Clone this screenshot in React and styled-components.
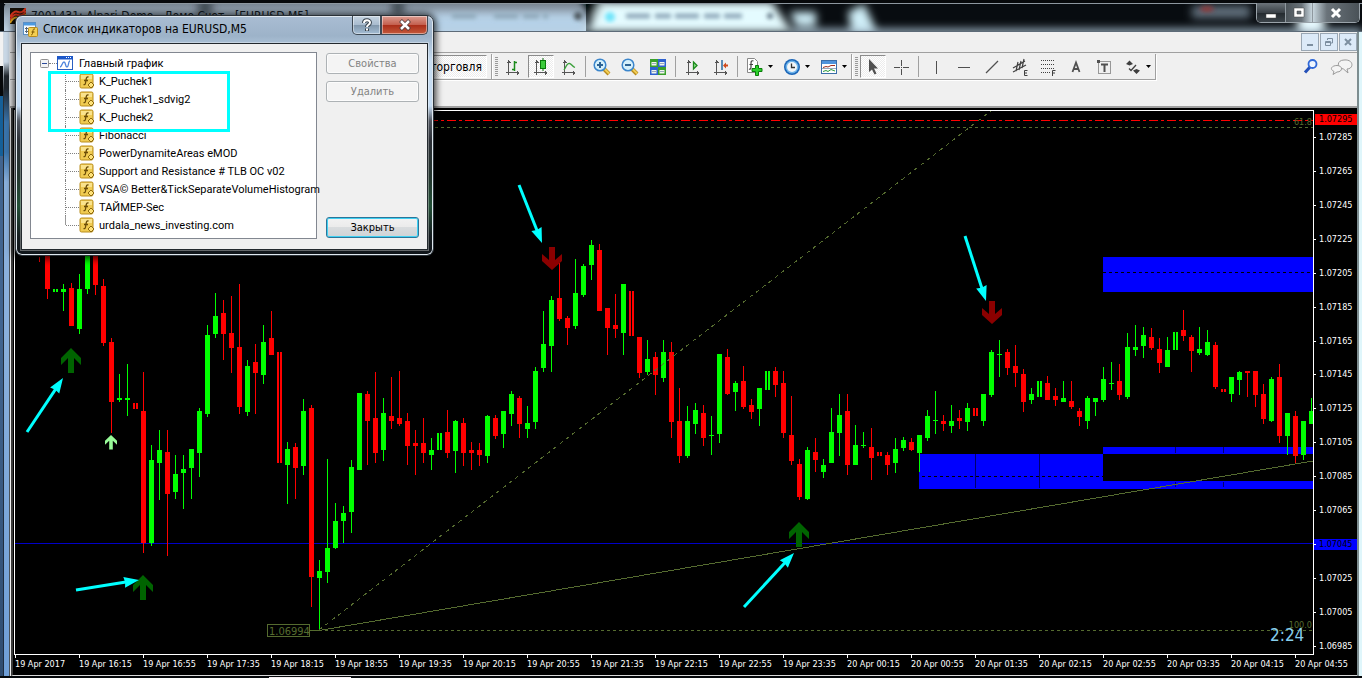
import React from 'react';
import styled, { createGlobalStyle } from 'styled-components';

const UI_FONT = '"DejaVu Sans Condensed", "Noto Sans", sans-serif';
const OLIVE = '#556b2f';

const GlobalStyle = createGlobalStyle`
  * { box-sizing: border-box; }
  body { margin: 0; background: #000; font-family: ${UI_FONT}; font-size: 11px; color: #000; }
  button { font: inherit; padding: 0; margin: 0; }
  svg { display: block; flex: none; }
`;

/* ---------- window frame ---------- */

const Screen = styled.div`
  position: relative;
  min-height: 100vh;
  overflow: hidden;
  background: #05080b;
`;

const TitleBar = styled.header`
  display: flex;
  align-items: flex-start;
  height: 32px;
  border-top: 3px solid #07090b;
  border-bottom: 1px solid #5d6b78;
  overflow: hidden;
  position: relative;
  background: #080c10;
`;

const Glass = styled.svg`
  position: absolute;
  left: 0;
  top: 0;
`;

const WindowTitle = styled.div`
  position: relative;
  display: flex;
  flex: 1;
  gap: 5px;
  padding: 5px 0 0 10px;
  font-size: 12px;
  line-height: 16px;
  color: #101820;
`;

const CaptionGroup = styled.div`
  position: relative;
  display: flex;
  height: 20px;
  margin-right: 2px;
  border: 1px solid #9aa3aa;
  border-top: 0;
  border-radius: 0 0 5px 5px;
  overflow: hidden;
`;

const CaptionButton = styled.button`
  display: grid;
  place-items: center;
  width: ${(p) => p.$width}px;
  border: 0;
  border-left: ${(p) => (p.$first ? 0 : '1px solid #8f989f')};
  background: ${(p) => p.$fill || 'linear-gradient(#6c747b, #3a4147 50%, #23292e 51%, #3b4349)'};
`;

const Frame = styled.div`
  display: grid;
  grid-template-columns: 10px 1fr 5px;
`;

const RightEdge = styled.div`
  background: linear-gradient(90deg, #7d8d90 0 2px, #dff6fb 2px);
`;

const LeftEdge = styled.div`
  display: grid;
  grid-template-columns: 3px 1px 5px 1px;
`;

const Desktop = styled.div`
  background: linear-gradient(#f2f2f2 34px, #06080a 34px 64px, #155f98 64px 124px, #41648f 124px 300px, #2f4c70);
`;

const EdgeLine = styled.div`
  background: ${(p) => p.$fill};
`;

const Client = styled.main`
  min-width: 0;
  background: #f0f0f0;
`;

/* ---------- menu and tool bars ---------- */

const MenuRow = styled.div`
  display: flex;
  justify-content: flex-end;
  gap: 1px;
  height: 21px;
  padding: 1px 0;
  border-bottom: 1px solid #a0a0a0;
`;

const ChildButton = styled.button`
  display: grid;
  place-items: center;
  width: 18px;
  height: 18px;
  border: 1px solid #9aa7b4;
  background: #dceaf8;
`;

const ToolRow = styled.div`
  display: flex;
  height: 55px;
  padding-top: 1px;
  border-bottom: 2px solid #a0a0a0;
  align-items: flex-start;
`;

const ToolBar = styled.div`
  display: flex;
  align-items: center;
  height: 26px;
  border-right: 1px solid #a0a0a0;
  border-bottom: 1px solid #a0a0a0;
  box-shadow: 1px 1px 0 #fff;
`;

const Grip = styled.span`
  width: 3px;
  height: 20px;
  margin: 0 1px 0 3px;
  background: repeating-linear-gradient(#9a9a9a 0 1px, #f0f0f0 1px 2px);
`;

const pressed = `
  border: 1px solid #fff;
  border-top-color: #8c8c8c;
  border-left-color: #8c8c8c;
  background: repeating-conic-gradient(#fff 0 25%, #ececec 0 50%) 0 0 / 2px 2px;
`;

const Tool = styled.button`
  display: flex;
  align-items: center;
  justify-content: center;
  width: ${(p) => (p.$menu ? 37 : p.$pressed ? 26 : 28)}px;
  height: 23px;
  margin: 0 ${(p) => (p.$pressed ? 1 : 0)}px;
  gap: 3px;
  border: 0;
  background: transparent;
  ${(p) => p.$pressed && pressed}
`;

const Lead = styled.span`
  width: 367px;
`;

const AutoTrade = styled.button`
  width: 110px;
  height: 23px;
  margin-right: 4px;
  padding-right: 4px;
  text-align: right;
  font-size: 12px;
  line-height: 16px;
  ${pressed}
`;

const Divider = styled.span`
  width: 1px;
  height: 21px;
  margin: 0 ${(p) => (p.$wide ? 3 : 2)}px;
  background: #a0a0a0;
`;

const RightTools = styled.div`
  display: flex;
  gap: 9px;
  margin-left: auto;
  padding: 3px 4px 0 0;
`;

const PlainButton = styled.button`
  border: 0;
  background: transparent;
`;

/* ---------- chart ---------- */

const ChartWindow = styled.section`
  display: grid;
  grid-template-columns: 1fr 43px;
  margin-left: 1px;
  border-left: 2px solid #3c3c3c;
  padding: 2px 0 0 1px;
  background: #000;
  border-bottom: 1px solid #d8d8d8;
`;

const Plot = styled.div`
  min-width: 0;
  overflow: hidden;
  border: 1px solid #fff;
`;

const Scene = styled.svg`
  width: 100%;
  height: 543px;
`;

const PriceAxis = styled.div`
  display: flex;
  flex-direction: column;
  justify-content: space-between;
  position: relative;
  padding: 22px 0 3px;
  color: #fff;
  font-size: 9px;
  line-height: 11px;
`;

const Price = styled.div`
  display: flex;
  align-items: center;
  gap: 3px;
  color: ${(p) => (p.$tag ? '#000' : '#fff')};
  background: ${(p) => p.$tag || 'transparent'};
  &::before { content: ''; width: 2px; height: 1px; background: #fff; }
`;

const AskTag = styled.div`
  position: absolute;
  top: 4px;
  left: 1px;
  right: 0;
  padding-left: 4px;
  color: #000;
  background: #f00;
`;

const TimeAxis = styled.div`
  grid-column: 1 / -1;
  display: flex;
  height: 20px;
  padding-left: 1px;
  overflow: hidden;
  color: #fff;
  font-size: 9px;
  line-height: 13px;
`;

const Time = styled.div`
  flex: none;
  width: 64px;
  white-space: nowrap;
  &::before { content: ''; display: block; width: 1px; height: 3px; background: #fff; }
`;

const ScreenStrip = styled.div`
  width: 82px;
  height: 2px;
  margin: 1px 0 0 269px;
  background: #f6eef2;
`;

/* ---------- dialog ---------- */

const Dialog = styled.section`
  position: absolute;
  left: 15px;
  top: 15px;
  width: 419px;
  padding: 0 5px 5px;
  border: 1px solid #2b3238;
  border-radius: 7px;
  background: linear-gradient(#a9bdd3 0, #9db3c9 20px, #c7dcf0 45px, #c4dbf2 90px, #4f555f 105px, #2b2f36 125px, #24352e 160px, #235037 190px, #161d20 220px, #10151a);
  box-shadow: inset 0 0 0 1px #dfe7ee, 0 1px 7px 2px rgba(0, 0, 0, 0.75);
`;

const DialogTitle = styled.header`
  display: flex;
  height: 27px;
  padding-left: 2px;
`;

const TitleText = styled.h1`
  flex: 1;
  margin: 0;
  padding-left: 4px;
  font-size: 12px;
  line-height: 26px;
  font-weight: 400;
`;

const TitleButton = styled.button`
  display: grid;
  place-items: center;
  width: ${(p) => (p.$close ? 47 : 29)}px;
  height: 19px;
  border: 1px solid #3f4a55;
  border-top: 0;
  border-radius: ${(p) => (p.$close ? '0 0 5px 0' : '0 0 0 5px')};
  background: ${(p) =>
    p.$close
      ? 'linear-gradient(#dc9c90, #c4604f 48%, #a92c18 50%, #c55a3c)'
      : 'linear-gradient(#c5d3e0, #a9bccf 48%, #8096ab 50%, #a4bdd4)'};
  box-shadow: inset 0 0 0 1px rgba(255, 255, 255, 0.45);
`;

const DialogBody = styled.div`
  display: flex;
  gap: 9px;
  height: 207px;
  padding: 8px 8px 10px;
  border: 1px solid #23292e;
  background: #f0f0f0;
  box-shadow: 0 0 0 1px rgba(255, 255, 255, 0.35);
`;

const Tree = styled.div`
  position: relative;
  flex: 1;
  min-width: 0;
  padding: 1px 0 0 9px;
  border: 1px solid #828790;
  background: #fff;
  font-family: Roboto, "DejaVu Sans Condensed", sans-serif;
`;

const TreeRoot = styled.div`
  display: flex;
  align-items: center;
  height: 18px;
  white-space: nowrap;
`;

const Leader = styled.span`
  flex: none;
  width: ${(p) => p.$width}px;
  border-top: 1px dotted #808080;
`;

const NodeName = styled.span`
  padding-left: ${(p) => (p.$root ? 6 : 4)}px;
`;

const TreeList = styled.ul`
  list-style: none;
  margin: 0 0 0 25px;
  padding: 0;
`;

const TreeItem = styled.li`
  display: flex;
  align-items: center;
  height: 18px;
  white-space: nowrap;
  border-left: 1px dotted #808080;
  &:last-child { border-image: linear-gradient(#999 50%, transparent 50%) 1; }
`;

const Highlight = styled.div`
  position: absolute;
  left: 17px;
  top: 18px;
  width: 182px;
  height: 61px;
  border: 3px solid #0ff;
`;

const Actions = styled.div`
  display: flex;
  flex-direction: column;
  gap: 7px;
  width: 93px;
  padding: 1px 0;
`;

const PushButton = styled.button`
  height: 21px;
  border: 1px solid ${(p) => (p.$primary ? '#2c7599' : '#adb2b5')};
  border-radius: 3px;
  background: ${(p) => (p.$primary ? 'linear-gradient(#f2f2f2, #ebebeb 48%, #d9dcde 50%, #cfd3d6)' : '#f4f4f4')};
  box-shadow: inset 0 0 0 1px ${(p) => (p.$primary ? '#3fd0f2' : '#fcfcfc')};
  color: ${(p) => (p.$primary ? '#000' : '#838383')};
  margin-top: ${(p) => (p.$primary ? 'auto' : '0')};
`;

/* ---------- candles: colour, high, body top, body bottom, low (* = split body) ---------- */

const CANDLES = `
R257 257 262 262|R250 250 289 299|G* 289 292|G284 289 292 311|R283 288 326 326|G274 289 329 334|G250 250 289 294|R250 250 285 295|R279 286 343 346|R338 342 402 433
G374 398 400 402|G364 398 400 416|R* 403 409|R372 411 543 553|G445 460 543 546|G430 450 463 500|R430 452 494 556|G455 474 492 499|G455 469 473 509|G449 449 468 499
G408 411 453 477|G325 335 414 417|G293 316 334 338|R300 313 334 360|R296 333 348 373|R284 347 407 414|G360 366 412 416|R344 362 373 414|G325 342 375 384|R311 338 355 355
R* 352 463|G442 449 465 504|R443 447 468 499|G399 411 466 475|R405 408 577 607|G560 571 578 630|G459 548 572 583|G503 521 548 549|G506 513 521 543|G460 467 512 533
G393 393 470 470|R391 394 421 465|R372 418 453 463|G398 413 450 461|R377 416 421 429|R371 418 424 426|R413 421 446 465|R430 443 446 475|R418 443 453 463|G438 450 455 470
G* 433 450|R410 432 453 458|G420 421 451 473|R418 423 453 466|R442 450 453 470|R443 450 455 466|G415 416 456 463|R415 418 436 439|G411 411 434 448|G391 394 414 426
R396 398 424 438|G406 423 429 438|G367 371 422 429|G311 344 368 372|G296 300 346 372|R263 298 319 321|R316 318 328 345|G259 293 326 329|G264 266 295 297|G240 245 265 280
R244 250 311 311|R308 308 328 355|R294 325 329 338|G284 284 333 355|R* 291 336|R337 337 373 378|G340 359 372 375|R352 357 375 395|G340 352 378 382|R342 352 422 438
R388 421 456 463|G406 421 456 458|G403 410 424 434|R405 413 438 446|G416 435 436 455|G354 354 434 443|R349 357 394 395|G381 383 392 411|R366 381 407 409|R399 405 412 419
G388 388 409 426|G* 371 390|R367 371 385 397|R371 383 433 438|R396 435 461 465|R459 464 497 500|G447 450 499 500|R438 452 460 472|G459 465 472 478|G408 432 463 463
G394 415 433 456|R394 411 465 475|G425 445 465 465|G432 445 446 448|R428 447 458 480|R* 452 456|R452 455 465 475|G438 449 463 473|G437 440 448 451|R438 442 450 451
G435 435 453 472|G410 416 438 441|G391 420 421 434|R415 421 424 431|G405 421 426 433|R410 418 421 429|G403 408 422 431|R* 408 416|G394 394 421 426|G350 352 395 397
G340 354 355 377|R349 352 368 375|R345 366 373 387|R369 374 402 412|G388 394 400 404|G* 381 397|R376 383 400 400|R388 396 400 406|G381 398 402 402|R381 401 407 409
R408 411 417 426|G396 398 421 429|G398 398 402 416|G367 379 400 402|G362 383 384 390|R364 381 395 400|G333 347 397 399|G325 347 350 356|G327 335 346 358|R328 337 348 350
R338 349 363 373|G337 350 367 367|G* 332 350|R310 330 336 341|R335 337 351 372|G327 349 353 355|G330 342 355 356|R342 345 387 389|R* 389 392|G377 377 394 402
G371 372 380 395|R371 371 373 397|R371 371 395 407|R384 394 419 424|G377 379 421 422|R364 377 436 443|G413 413 436 455|R411 416 456 464|G421 421 455 460|G398 411 424 424
`
  .trim()
  .split(/[|\n]/)
  .map((s, i) => {
    const v = s.slice(1).trim().split(' ');
    const split = v[0] === '*';
    const [high, top, bottom, low] = split ? [0, +v[1], +v[2], 0] : v.map(Number);
    return { x: 39 + 8 * i, color: s[0] === 'R' ? '#f00' : '#0f0', split, high, top, bottom, low };
  });

const PRICES = ['1.07285', '1.07265', '1.07245', '1.07225', '1.07205', '1.07185', '1.07165', '1.07145', '1.07125', '1.07105', '1.07085', '1.07065', '1.07045', '1.07025', '1.07005', '1.06985'];
const TIMES = ['19 Apr 2017', '19 Apr 16:15', '19 Apr 16:55', '19 Apr 17:35', '19 Apr 18:15', '19 Apr 18:55', '19 Apr 19:35', '19 Apr 20:15', '19 Apr 20:55', '19 Apr 21:35', '19 Apr 22:15', '19 Apr 22:55', '19 Apr 23:35', '20 Apr 00:15', '20 Apr 00:55', '20 Apr 01:35', '20 Apr 02:15', '20 Apr 02:55', '20 Apr 03:35', '20 Apr 04:15', '20 Apr 04:55'];
const INDICATORS = ['K_Puchek1', 'K_Puchek1_sdvig2', 'K_Puchek2', 'Fibonacci', 'PowerDynamiteAreas eMOD', 'Support and Resistance # TLB OC v02', 'VSA© Better&TickSeparateVolumeHistogram', 'ТАЙМЕР-Sec', 'urdala_news_investing.com'];
const POINTERS = [[27, 432, 63, 378], [76, 590, 139, 580], [519, 185, 542, 243], [744, 607, 794, 553], [965, 236, 986, 301]];

function Candle({ x, color, split, high, top, bottom, low }) {
  if (split) {
    return (
      <g fill={color}>
        <rect x={x - 2} y={top} width="2" height={bottom - top} />
        <rect x={x + 1} y={top} width="2" height={bottom - top} />
      </g>
    );
  }
  return (
    <g fill={color}>
      <rect x={x} y={high} width="1" height={low - high} />
      {x > 39 && <rect x={x - 2} y={top} width="5" height={bottom - top} />}
    </g>
  );
}

function Signal({ x, y, color, down, small }) {
  const flip = down ? -1 : 1;
  return (
    <path
      transform={`translate(${x} ${y}) scale(${small ? 0.6 : 1} ${flip * (small ? 0.58 : 1)})`}
      fill={color}
      d={down ? 'M0 0L10 9V16L3 10V23H-3V10L-10 16V9Z' : 'M0 0L10 10V17L3 10V25H-3V10L-10 17V10Z'}
    />
  );
}

function Pointer({ from: [x1, y1, x2, y2] }) {
  const a = Math.atan2(y2 - y1, x2 - x1);
  const len = Math.hypot(x2 - x1, y2 - y1);
  return (
    <g transform={`translate(${x1} ${y1}) rotate(${(a * 180) / Math.PI})`} fill="#0ff">
      <rect x="0" y="-1.5" width={len - 10} height="3" />
      <path d={`M${len} 0L${len - 15} -5.5L${len - 14} 0L${len - 15} 5.5Z`} />
    </g>
  );
}

function Chart() {
  return (
    <Scene viewBox="15 111 1298 543" preserveAspectRatio="xMinYMin slice" fontFamily='"DejaVu Sans Condensed", sans-serif'>
      <g fill="#00f" shapeRendering="crispEdges">
        <rect x="1103" y="257" width="210" height="35" />
        <rect x="919" y="454" width="184" height="35" />
        <rect x="1103" y="447" width="210" height="7" />
        <rect x="1103" y="481" width="210" height="8" />
      </g>
      <g stroke="#000" fill="none" shapeRendering="crispEdges">
        <path d="M1103 272.5H1313M922 476.5H1103" strokeDasharray="3 3" />
        <path d="M975.5 454V488M1039.5 454V488" stroke="#00006a" />
        <path d="M1175.5 447V453M1223.5 447V453M1175.5 482V487M1223.5 482V487" stroke="#00006a" />
      </g>
      <path d="M15 543.5H1313" stroke="#0000c8" shapeRendering="crispEdges" />
      <g shapeRendering="crispEdges">{CANDLES.map((c) => <Candle key={c.x} {...c} />)}</g>
      <g stroke={OLIVE} fill="none" shapeRendering="crispEdges">
        <path d="M15 127.5H1313M319 630.5H1313" strokeDasharray="3 3" />
        <path d="M319 630L992 110" strokeDasharray="4 4" />
        <path d="M310 630.5H319L1313 461" />
        <rect x="267.5" y="624.5" width="42" height="12" />
      </g>
      <path d="M15 120.5H1313" stroke="#f00" strokeDasharray="9 3 3 3" shapeRendering="crispEdges" />
      <g fill={OLIVE} fontSize="9">
        <text x="1312" y="125" textAnchor="end">61.8</text>
        <text x="1312" y="628" textAnchor="end">100.0</text>
        <text x="269" y="635" fontSize="11">1.06994</text>
      </g>
      <text x="1270" y="641" fill="#87ceeb" fontSize="17">2:24</text>
      <Signal x={71} y={348} color="#006400" />
      <Signal x={143} y={575} color="#006400" />
      <Signal x={799} y={522} color="#006400" />
      <Signal x={552} y={270} color="#8b0000" down />
      <Signal x={992} y={324} color="#8b0000" down />
      <Signal x={111} y={435} color="#98fb98" small />
      {POINTERS.map((p) => <Pointer key={p[0]} from={p} />)}
    </Scene>
  );
}

/* ---------- icons ---------- */

function Icon({ children, size = 20 }) {
  return <svg width={size} height="20" viewBox={`0 0 ${size} 20`} fill="none" aria-hidden="true">{children}</svg>;
}

const Axes = () => (
  <g stroke="#555" shapeRendering="crispEdges">
    <path d="M5.500 3V18M3 15.500H16" />
    <path d="M3.500 5.500H8M4.500 4.500H7M14.500 13.500V18M15.500 14.500V17" />
  </g>
);

const Magnifier = ({ plus }) => (
  <Icon>
    <path d="M11.500 11.500L17 17" stroke="#b88a1c" strokeWidth="4" />
    <path d="M11.500 11L17 16.500" stroke="#f2cf57" strokeWidth="2" />
    <circle cx="8" cy="8" r="5.800" fill="#d5f0fb" stroke="#3b86cc" strokeWidth="1.500" />
    <path d={plus ? 'M5 8H11M8 5V11' : 'M5 8H11'} stroke="#2d6394" strokeWidth="2" />
  </Icon>
);

const DropArrow = () => (
  <svg width="5" height="3" viewBox="0 0 5 3" aria-hidden="true"><path d="M0 0H5L2.500 3Z" fill="#000" /></svg>
);

const icons = {
  bars: <Icon><Axes /><path d="M11.500 4V14M9 12.500H11.500M11.500 5.500H14" stroke="#1a8a1a" strokeWidth="1.500" /></Icon>,
  candles: <Icon><Axes /><path d="M12 1V14" stroke="#0a6a0a" /><rect x="9.500" y="3.500" width="5" height="8" fill="#3ccc3c" stroke="#0a7a0a" /></Icon>,
  line: <Icon><Axes /><path d="M5 13C7 10 8 6 10.500 6.500C13 7 13 9.500 16 10.500" stroke="#3aa03a" strokeWidth="1.300" /></Icon>,
  zoomIn: <Magnifier plus />,
  zoomOut: <Magnifier />,
  tile: (
    <Icon>
      <rect x="2" y="2" width="8" height="8" fill="#3aa02c" /><rect x="10" y="2" width="8" height="8" fill="#2e62d0" />
      <rect x="2" y="10" width="8" height="8" fill="#2e62d0" /><rect x="10" y="10" width="8" height="8" fill="#3aa02c" />
      <path d="M3.500 5H8.500V8.500H3.500ZM11.500 5H16.500V8.500H11.500ZM3.500 13H8.500V16.500H3.500ZM11.500 13H16.500V16.500H11.500Z" fill="#f2f6ee" />
      <path d="M4 6.500H8M12 6.500H16M4 14.500H8M12 14.500H16" stroke="#9ab" />
    </Icon>
  ),
  scroll: <Icon><Axes /><path d="M10.500 5L14 8.500L10.500 12Z" fill="#8fe08f" stroke="#1a8a1a" strokeWidth="1.300" /></Icon>,
  shift: <Icon><Axes /><path d="M11 3V13" stroke="#2a6aa0" strokeWidth="1.500" /><path d="M12 8.500L15 5.500V7.500H17V9.500H15V11.500Z" fill="#d04a1c" /></Icon>,
  addIndicator: (
    <Icon>
      <path d="M2.500 1.500H9.500L12.500 4.500V15.500H2.500Z" fill="#fff" stroke="#888" />
      <path d="M8.500 4C6 3 6 5 6 7V10C6 12 5 12.500 4 12M4.500 7.500H8" stroke="#444" strokeWidth="1.200" />
      <path d="M10.500 8.500H13.500V11.500H17V14.500H13.500V18.500H10.500V14.500H7V11.500H10.500Z" fill="#2bd02b" stroke="#0b7c0b" />
    </Icon>
  ),
  clock: (
    <Icon>
      <circle cx="10" cy="10" r="8" fill="#1b66b8" /><circle cx="10" cy="10" r="6.500" fill="#6fb4ea" /><circle cx="10" cy="10" r="5" fill="#f2f5f8" />
      <path d="M9.500 6.500V10.500H13" stroke="#333" strokeWidth="1.300" />
    </Icon>
  ),
  template: (
    <Icon>
      <rect x="2.500" y="3.500" width="15" height="13" fill="#fff" stroke="#3a6ea8" /><rect x="3" y="4" width="14" height="3" fill="#4f94dc" />
      <path d="M4 10.500L7 9.500L9 10L12 8.500L16 8.500" stroke="#a03020" /><path d="M4 14.500L7 13.500L9 14.500L12 12.500L16 14" stroke="#2a9a3a" /><path d="M3 11.500H17" stroke="#9ab" />
    </Icon>
  ),
  cursor: <Icon><path d="M6 2V15L9 12.500L11.500 17.500L13.500 16.500L11 11.500H15Z" fill="#505050" /></Icon>,
  cross: <Icon><path d="M10.500 3V9M10.500 12V18M3 10.500H9M12 10.500H18M10 10.500H11" stroke="#505050" /></Icon>,
  vline: <Icon><path d="M10.500 4V17" stroke="#505050" /></Icon>,
  hline: <Icon><path d="M4 10.500H16" stroke="#505050" /></Icon>,
  trend: <Icon><path d="M4 16L16 4" stroke="#505050" strokeWidth="1.200" /></Icon>,
  channel: (
    <Icon>
      <path d="M3 11L15 4M3 15L16 8M6 14L8 5M9 13L11 4M12 11L14 2" stroke="#404040" strokeWidth="1.200" />
      <path d="M17.500 13.500H14.500V18.500H17.500M14.500 16H17" stroke="#404040" />
    </Icon>
  ),
  fibo: (
    <Icon>
      <path d="M3 3.500H17M3 7.500H17M3 11.500H17M3 15.500H12" stroke="#404040" strokeDasharray="1 1" />
      <path d="M17.500 13.500H14.500V19M14.500 16H17" stroke="#404040" />
    </Icon>
  ),
  text: <Icon><path d="M6.500 15L10 5.500L13.500 15M7.500 12H12.500" stroke="#505050" strokeWidth="1.800" /></Icon>,
  label: (
    <Icon>
      <rect x="4.500" y="4.500" width="12" height="12" stroke="#404040" strokeDasharray="1 1" /><path d="M3 3H6V6H3Z" fill="#505050" />
      <path d="M7 7.500H14M10.500 7.500V15" stroke="#505050" strokeWidth="2" />
    </Icon>
  ),
  arrows: <Icon><path d="M3 7L6.500 3.500L10 7L6.500 8.500ZM10 13.500L13.500 12L17 13.500L13.500 17Z" fill="#404040" /><path d="M6 11.500L8 13.500L13 8" stroke="#404040" strokeWidth="1.300" /></Icon>,
};

const FunctionIcon = () => (
  <svg width="16" height="16" viewBox="0 0 16 16" fill="none" aria-hidden="true">
    <rect x="1" y="1" width="13" height="14" rx="1.500" fill="#f0cb52" stroke="#b98d1c" />
    <path d="M2 2H13V6H2Z" fill="#fae38c" />
    <path d="M9.500 4C7.500 3.500 7.300 5 7 7L6.500 10C6.300 11.500 5.500 12 4.500 11.500M5 7.500H9" stroke="#6b4d08" strokeWidth="1.300" />
    <path d="M12 9L15 12L12 15L9 12Z" fill="#ffe27a" stroke="#8f6a0c" />
  </svg>
);

function ToolButton({ icon, label, ...rest }) {
  return (
    <Tool aria-label={label} {...rest}>
      {icons[icon]}
      {rest.$menu && <DropArrow />}
    </Tool>
  );
}

/* ---------- page parts ---------- */

function MainTitle() {
  return (
    <TitleBar>
      <Glass width="1362" height="29" viewBox="0 3 1362 29" aria-hidden="true">
        <defs>
          <linearGradient id="tab" x1="0" y1="0" x2="0" y2="1"><stop offset="0" stopColor="#76838f" /><stop offset="0.500" stopColor="#a3b4c5" /><stop offset="1" stopColor="#c2d6e8" /></linearGradient>
          <filter id="soft"><feGaussianBlur stdDeviation="4" /></filter>
          <filter id="mist"><feGaussianBlur stdDeviation="2" /></filter>
        </defs>
        <path d="M4 32V8Q4 3 9 3H586V32Z" fill="url(#tab)" />
        <g filter="url(#soft)">
          <path d="M430 14H580L586 32H430Z" fill="#b6d2e8" />
          <path d="M586 32L602 2H772L792 32Z" fill="#e4fbff" />
          <path d="M580 -6H606L594 18H588Z" fill="#05080b" />
          <path d="M198 0H212V14H198ZM392 0H404V14H392Z" fill="#3a444e" />
          <path d="M790 12H816V26H796ZM848 12L864 4L878 34H852Z" fill="#cfeef8" />
          <path d="M790 29H1362V36H790Z" fill="#a8c0d0" />
          <path d="M1192 6H1250V18H1192Z" fill="#64727f" />
          <ellipse cx="1311" cy="22" rx="15" ry="9" fill="#e8faff" />
        </g>
        <g filter="url(#mist)">
          <path d="M452 16H478M494 16H548M626 16H742" stroke="#8fa9ba" strokeWidth="5" strokeDasharray="24 5 16 4" />
          <circle cx="610" cy="17" r="5" fill="#6fe4fa" /><circle cx="578" cy="16" r="4" fill="#48525a" /><circle cx="770" cy="16" r="3" fill="#607684" />
          <ellipse cx="1207" cy="9" rx="7" ry="3" fill="#8a3b3e" />
        </g>
        <path d="M4 3.500H1362" stroke="#8d979f" />
      </Glass>
      <WindowTitle>
        <svg width="16" height="16" viewBox="0 0 16 16" aria-hidden="true">
          <rect width="16" height="16" fill="#151008" />
          <path d="M0 9Q4 2 8 4T16 0M0 12Q4 5 8 7T16 3" stroke="#d8341c" strokeWidth="2" fill="none" /><path d="M0 15Q4 8 8 10T16 6" stroke="#f0b020" strokeWidth="2" fill="none" />
        </svg>
        <span>7001431: Alpari-Demo - Демо Счет - [EURUSD,M5]</span>
      </WindowTitle>
      <CaptionGroup>
        <CaptionButton $width={28} $first aria-label="Свернуть">
          <svg width="12" height="12" viewBox="0 0 12 12"><rect x="1" y="7" width="10" height="4" fill="#fff" stroke="#444" strokeWidth=".5" /></svg>
        </CaptionButton>
        <CaptionButton $width={27} aria-label="Развернуть" $fill="linear-gradient(90deg, #4c545a, #6a737a 60%, #c8d6de)">
          <svg width="12" height="12" viewBox="0 0 12 12"><path d="M1 1H11V10H1ZM4 4V7H8V4Z" fill="#fff" fillRule="evenodd" stroke="#444" strokeWidth=".5" /></svg>
        </CaptionButton>
        <CaptionButton $width={47} aria-label="Закрыть окно" $fill="linear-gradient(90deg, #c8d6de, #6a737a 30%, #4a5258)">
          <svg width="12" height="12" viewBox="0 0 12 12"><path d="M2 2L10 10M10 2L2 10" stroke="#fff" strokeWidth="3" /></svg>
        </CaptionButton>
      </CaptionGroup>
    </TitleBar>
  );
}

function Tools() {
  return (
    <ToolRow>
      <ToolBar>
        <Lead />
        <AutoTrade>Авто-торговля</AutoTrade>
      </ToolBar>
      <ToolBar>
        <Grip />
        <ToolButton icon="bars" label="Бары" />
        <ToolButton icon="candles" label="Свечи" $pressed />
        <ToolButton icon="line" label="Линия" />
        <Divider />
        <ToolButton icon="zoomIn" label="Увеличить" />
        <ToolButton icon="zoomOut" label="Уменьшить" />
        <ToolButton icon="tile" label="Окна мозаикой" />
        <Divider $wide />
        <ToolButton icon="scroll" label="Автопрокрутка" />
        <ToolButton icon="shift" label="Сдвиг графика" />
        <Divider />
        <ToolButton icon="addIndicator" label="Индикаторы" $menu />
        <ToolButton icon="clock" label="Периоды" $menu />
        <ToolButton icon="template" label="Шаблоны" $menu />
      </ToolBar>
      <ToolBar>
        <Grip />
        <ToolButton icon="cursor" label="Курсор" $pressed />
        <ToolButton icon="cross" label="Перекрестие" />
        <Divider $wide />
        <ToolButton icon="vline" label="Вертикальная линия" />
        <ToolButton icon="hline" label="Горизонтальная линия" />
        <ToolButton icon="trend" label="Трендовая линия" />
        <ToolButton icon="channel" label="Канал" />
        <ToolButton icon="fibo" label="Линии Фибоначчи" />
        <ToolButton icon="text" label="Текст" />
        <ToolButton icon="label" label="Текстовая метка" />
        <ToolButton icon="arrows" label="Стрелки" $menu />
      </ToolBar>
      <RightTools>
        <PlainButton aria-label="Поиск">
          <svg width="18" height="20" viewBox="0 0 18 20" fill="none"><path d="M8 10L3 15.500" stroke="#2450b8" strokeWidth="3" /><circle cx="10.500" cy="7" r="4" fill="#eef5ff" stroke="#2f68d8" strokeWidth="1.800" /></svg>
        </PlainButton>
        <PlainButton aria-label="Чат">
          <svg width="24" height="20" viewBox="0 0 24 20" fill="#f4f4f4" stroke="#9a9a9a"><path d="M15 3C25 2 25 12 18 12L19 16L14.500 12C7 11 8 3 15 3Z" /><path d="M8 8.500C14 8.500 14 15 8 15L4 17.500L5 14.500C0 12 3 8.500 8 8.500Z" /></svg>
        </PlainButton>
      </RightTools>
    </ToolRow>
  );
}

function IndicatorDialog() {
  return (
    <Dialog aria-label="Список индикаторов">
      <DialogTitle>
        <svg width="16" height="27" viewBox="0 -6 16 27" fill="none" aria-hidden="true">
          <rect x=".5" y=".5" width="12" height="12" fill="#f4faff" stroke="#5b8fc4" /><path d="M1 1H12V3.500H1Z" fill="#4c9ae0" /><path d="M3.500 5V11M2 6.500H5M2 9.500H5" stroke="#567" />
          <rect x="5.500" y="5.500" width="9" height="9" rx="1" fill="#f4cf52" stroke="#b88a1c" /><path d="M12 7C10 6.500 10 8 9.800 10S9 13 8 13M8.500 10H11.500" stroke="#7a5500" />
        </svg>
        <TitleText>Список индикаторов на EURUSD,M5</TitleText>
        <TitleButton aria-label="Справка">
          <svg width="12" height="14" viewBox="0 0 12 14" fill="none"><path d="M3 5C3 1.500 9 1.500 9 4.500C9 7 6 6.500 6 9M6 10.500V13" stroke="#3a444e" strokeWidth="4" /><path d="M3 5C3 1.500 9 1.500 9 4.500C9 7 6 6.500 6 9M6 10.500V12.500" stroke="#fff" strokeWidth="2" /></svg>
        </TitleButton>
        <TitleButton $close aria-label="Закрыть диалог">
          <svg width="12" height="12" viewBox="0 0 12 12"><path d="M1.500 1.500L10.500 10.500M10.500 1.500L1.500 10.500" stroke="#4a3a3a" strokeWidth="4" /><path d="M2 2L10 10M10 2L2 10" stroke="#fff" strokeWidth="2.500" /></svg>
        </TitleButton>
      </DialogTitle>
      <DialogBody>
        <Tree>
          <TreeRoot>
            <svg width="9" height="9" viewBox="0 0 9 9"><rect x=".5" y=".5" width="8" height="8" rx="1" fill="#f4f4f4" stroke="#919191" /><path d="M2 4.500H7" stroke="#2b4a9a" /></svg>
            <Leader $width={8} />
            <svg width="16" height="16" viewBox="0 0 16 16" fill="none"><rect x=".5" y="1.500" width="15" height="13" fill="#fff" stroke="#2a5fc0" /><path d="M0 1H16V4.500H0Z" fill="#1c57c8" /><path d="M9 2.500H10M11 2.500H12M13 2.500H14" stroke="#fff" /><path d="M3 12C5 12 5 7 7 7S8 12 10 12S11 6 13 6" stroke="#4d84dc" strokeWidth="1.300" /></svg>
            <NodeName $root>Главный график</NodeName>
          </TreeRoot>
          <TreeList>
            {INDICATORS.map((name) => (
              <TreeItem key={name}><Leader $width={13} /><FunctionIcon /><NodeName>{name}</NodeName></TreeItem>
            ))}
          </TreeList>
          <Highlight />
        </Tree>
        <Actions>
          <PushButton disabled>Свойства</PushButton>
          <PushButton disabled>Удалить</PushButton>
          <PushButton $primary>Закрыть</PushButton>
        </Actions>
      </DialogBody>
    </Dialog>
  );
}

export default function App() {
  return (
    <Screen>
      <GlobalStyle />
      <MainTitle />
      <Frame>
        <LeftEdge>
          <Desktop />
          <EdgeLine $fill="linear-gradient(#cfd8e0 34px, #2a3036 60px, #1d2c40)" />
          <EdgeLine $fill="linear-gradient(#c9d8e6 30px, #20262c 44px 56px, #3a74ac 90px 120px, #8ab0dc 150px 300px, #6f9fd8)" />
          <EdgeLine $fill="linear-gradient(#dfe6ec 60px, #4a525a 100px)" />
        </LeftEdge>
        <Client>
          <MenuRow>
            <ChildButton aria-label="Свернуть график"><svg width="10" height="10"><path d="M2 8H8" stroke="#7d8fa0" strokeWidth="2" /></svg></ChildButton>
            <ChildButton aria-label="Восстановить график"><svg width="10" height="10" fill="none" stroke="#7d8fa0"><path d="M3.500 3V1.500H8.500V6H7M1.500 4.500H6.500V8.500H1.500ZM1.500 5.500H6" /></svg></ChildButton>
            <ChildButton aria-label="Закрыть график"><svg width="10" height="10"><path d="M2 2L8 8M8 2L2 8" stroke="#7d8fa0" strokeWidth="2" /></svg></ChildButton>
          </MenuRow>
          <Tools />
          <ChartWindow>
            <Plot><Chart /></Plot>
            <PriceAxis>
              <AskTag>1.07295</AskTag>
              {PRICES.map((p) => <Price key={p} $tag={p === '1.07045' ? '#00f' : undefined}>{p}</Price>)}
            </PriceAxis>
            <TimeAxis>{TIMES.map((t) => <Time key={t}>{t}</Time>)}</TimeAxis>
          </ChartWindow>
        </Client>
        <RightEdge />
      </Frame>
      <ScreenStrip />
      <IndicatorDialog />
    </Screen>
  );
}
